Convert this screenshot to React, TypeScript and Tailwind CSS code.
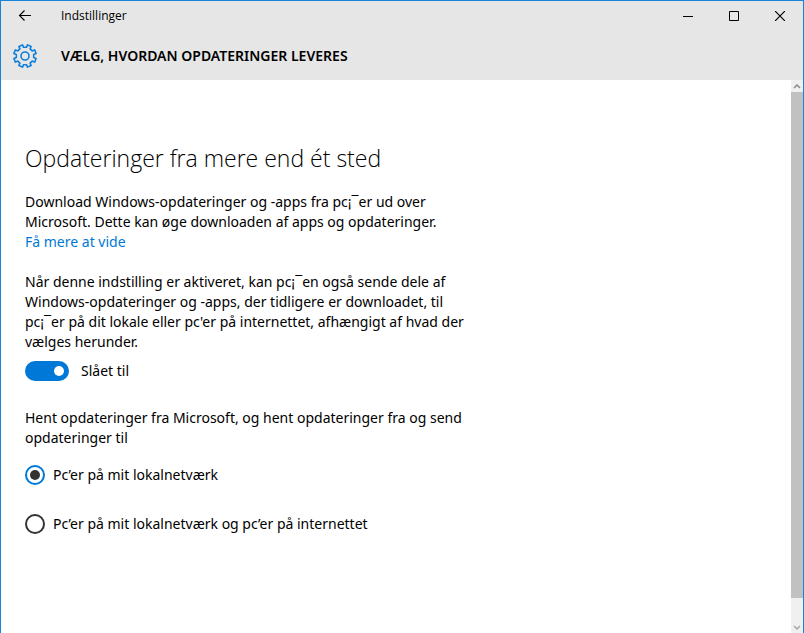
import React, { useState } from 'react';

type Source = 'local' | 'internet';

const sources: { id: Source; label: string }[] = [
  { id: 'local', label: 'Pc’er på mit lokalnetværk' },
  { id: 'internet', label: 'Pc’er på mit lokalnetværk og pc’er på internettet' },
];

// Eight teeth, with a gap pointing straight up
function gearPath(teeth: number, outer: number, inner: number) {
  const step = 360 / teeth;
  const points: string[] = [];
  for (let i = 0; i < teeth; i++) {
    const mid = i * step + step / 2;
    const corners = [
      [mid - 13, inner],
      [mid - 10, outer],
      [mid + 10, outer],
      [mid + 13, inner],
    ];
    corners.forEach(([deg, r]) => {
      const a = (deg * Math.PI) / 180;
      points.push(`${(13 + r * Math.sin(a)).toFixed(2)} ${(13 - r * Math.cos(a)).toFixed(2)}`);
    });
  }
  return `M${points.join('L')}Z`;
}

function GearIcon() {
  return (
    <svg viewBox="0 0 26 26" className="w-[26px] h-[26px]" fill="none" stroke="#0f7fd9" strokeWidth="1.6" strokeLinejoin="round" aria-hidden="true">
      <path d={gearPath(8, 11.4, 8.8)} />
      <circle cx="13" cy="13" r="4" />
    </svg>
  );
}

function TitleBar() {
  return (
    <div className="flex items-center h-[30px]">
      <button aria-label="Tilbage" className="w-12 h-full flex items-center justify-center">
        <svg viewBox="0 0 14 12" className="w-[14px] h-3" fill="none" stroke="#000" strokeWidth="1.1" aria-hidden="true">
          <path d="M13 5.5H1.5M6.5 .5l-5 5 5 5" />
        </svg>
      </button>
      <span className="ml-3 text-xs font-['Open_Sans',sans-serif]">Indstillinger</span>
      <div className="ml-auto h-full flex">
        <button aria-label="Minimer" className="w-[46px] flex items-center justify-center">
          <svg viewBox="0 0 10 10" className="w-[10px] h-[10px]" stroke="#000" shapeRendering="crispEdges" aria-hidden="true">
            <path d="M0 5.5h10" />
          </svg>
        </button>
        <button aria-label="Maksimer" className="w-[46px] flex items-center justify-center">
          <svg viewBox="0 0 10 10" className="w-[10px] h-[10px]" fill="none" stroke="#000" aria-hidden="true">
            <path d="M.5.5h9v9h-9z" />
          </svg>
        </button>
        <button aria-label="Luk" className="w-[46px] flex items-center justify-center">
          <svg viewBox="0 0 10 10" className="w-[10px] h-[10px]" stroke="#000" strokeWidth="1.2" aria-hidden="true">
            <path d="M0 0l10 10M10 0L0 10" />
          </svg>
        </button>
      </div>
    </div>
  );
}

function ScrollBar() {
  return (
    <div className="w-3 shrink-0 flex flex-col bg-[#f0f0f0]">
      <button aria-label="Rul op" className="h-3 flex items-center justify-center">
        <svg viewBox="0 0 8 5" className="w-2 h-[5px]" fill="none" stroke="#8a8a8a" strokeWidth="1.5" aria-hidden="true">
          <path d="M1 4l3-3 3 3" />
        </svg>
      </button>
      <div className="grow bg-[#c1c1c1]"></div>
      <div className="h-[23px]"></div>
      <button aria-label="Rul ned" className="h-3 flex items-center justify-center">
        <svg viewBox="0 0 8 5" className="w-2 h-[5px]" fill="none" stroke="#a8a8a8" strokeWidth="1.5" aria-hidden="true">
          <path d="M1 1l3 3 3-3" />
        </svg>
      </button>
    </div>
  );
}

export default function App() {
  const [enabled, setEnabled] = useState(true);
  const [source, setSource] = useState<Source>('local');

  return (
    <div className="min-h-screen flex flex-col bg-white text-black border-t border-x border-[#1883d7] font-['Noto_Sans','Open_Sans',sans-serif]">
      <header className="bg-[#e6e6e6]">
        <TitleBar />
        <div className="flex items-center h-[49px] pl-[11px] gap-[23px]">
          <GearIcon />
          <h1 className="text-sm font-semibold">VÆLG, HVORDAN OPDATERINGER LEVERES</h1>
        </div>
      </header>

      <div className="grow flex">
        <main className="grow px-6 pt-[62px] pb-8 text-sm leading-5 whitespace-nowrap">
          <h2 className="text-[23px] font-light leading-8 font-['Open_Sans',sans-serif]">Opdateringer fra mere end ét sted</h2>

          <p className="mt-[18px]">
            Download Windows-opdateringer og -apps fra pc¡¯er ud over
            <br />
            Microsoft. Dette kan øge downloaden af apps og opdateringer.
            <br />
            <a href="#more" className="text-[#0078d7]">Få mere at vide</a>
          </p>

          <p className="mt-5">
            Når denne indstilling er aktiveret, kan pc¡¯en også sende dele af
            <br />
            Windows-opdateringer og -apps, der tidligere er downloadet, til
            <br />
            pc¡¯er på dit lokale eller pc'er på internettet, afhængigt af hvad der
            <br />
            vælges herunder.
          </p>

          <div className="mt-[9px] flex items-center gap-3">
            <button
              id="delivery"
              role="switch"
              aria-checked={enabled}
              onClick={() => setEnabled(!enabled)}
              className={`w-11 h-5 px-[5px] rounded-full flex items-center ${enabled ? 'bg-[#0078d7] justify-end' : 'bg-[#999999] justify-start'}`}
            >
              <span className="w-[10px] h-[10px] rounded-full bg-white"></span>
            </button>
            <label htmlFor="delivery">{enabled ? 'Slået til' : 'Slået fra'}</label>
          </div>

          <fieldset className="mt-[27px]">
            <legend>
              Hent opdateringer fra Microsoft, og hent opdateringer fra og send
              <br />
              opdateringer til
            </legend>
            <div className="mt-[17px] flex flex-col gap-[29px]">
              {sources.map((item) => (
                <label key={item.id} className="flex items-center gap-2">
                  <input
                    type="radio"
                    name="source"
                    checked={source === item.id}
                    onChange={() => setSource(item.id)}
                    className="appearance-none w-5 h-5 rounded-full border-2 border-[#333333] checked:border-[#0078d7] flex items-center justify-center checked:before:content-[''] checked:before:w-[10px] checked:before:h-[10px] checked:before:rounded-full checked:before:bg-[#333333]"
                  />
                  {item.label}
                </label>
              ))}
            </div>
          </fieldset>
        </main>
        <ScrollBar />
      </div>
    </div>
  );
}
